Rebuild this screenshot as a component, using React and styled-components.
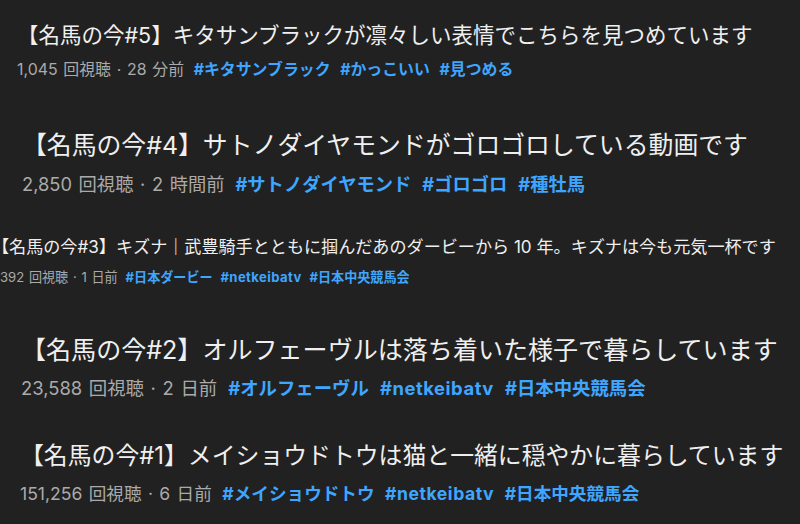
import React from "react";
import styled, { createGlobalStyle } from "styled-components";

const Global = createGlobalStyle`
  html, body { margin: 0; padding: 0; background: #212121; }
  body { font-family: "Inter", "Noto Sans CJK JP", sans-serif; }
`;

const Page = styled.div`
  width: 800px;
  height: 524px;
  overflow: hidden;
  background: #212121;
  display: flex;
  flex-direction: column;
  padding-top: 20px;
  box-sizing: border-box;
`;

const Block = styled.section`
  display: flex;
  flex-direction: column;
  gap: ${(p) => p.$gap}px;
  margin-top: ${(p) => p.$top}px;
  padding-left: ${(p) => p.$indent}px;
`;

const Title = styled.h3`
  margin: 0 0 0 ${(p) => p.$shift || 0}px;
  font-family: "Inter", "Noto Sans CJK JP", sans-serif;
  font-weight: 400;
  color: #efefef;
  font-size: ${(p) => p.$size}px;
  line-height: ${(p) => p.$lh}px;
  white-space: nowrap;
`;

const Meta = styled.div`
  font-family: "Inter", "Noto Sans CJK JP", sans-serif;
  color: #aaaaaa;
  font-size: ${(p) => p.$size}px;
  line-height: ${(p) => p.$lh}px;
  word-spacing: 0.08em;
  white-space: nowrap;
`;

const Tag = styled.span`
  color: #3ea6ff;
  font-weight: 700;
  margin-left: 0.6em;
  word-spacing: 0;
  letter-spacing: ${(p) => (p.$latin ? "0.03em" : "0")};
`;

const videos = [
  {
    title: "【名馬の今#5】キタサンブラックが凛々しい表情でこちらを見つめています",
    meta: "1,045 回視聴 · 28 分前",
    tags: ["#キタサンブラック", "#かっこいい", "#見つめる"],
    top: 0, indent: 17, tSize: 21.5, tLh: 30, mSize: 15.9, mLh: 20, gap: 10,
  },
  {
    title: "【名馬の今#4】サトノダイヤモンドがゴロゴロしている動画です",
    meta: "2,850 回視聴 · 2 時間前",
    tags: ["#サトノダイヤモンド", "#ゴロゴロ", "#種牡馬"],
    top: 48, indent: 22, tSize: 24.85, tLh: 34, mSize: 18.3, mLh: 24, gap: 10,
  },
  {
    title: "【名馬の今#3】キズナ｜武豊騎手とともに掴んだあのダービーから 10 年。キズナは今も元気一杯です",
    meta: "392 回視聴 · 1 日前",
    tags: ["#日本ダービー", "#netkeibatv", "#日本中央競馬会"],
    top: 39, indent: 0, tShift: -8, tSize: 17.1, tLh: 24, mSize: 13.1, mLh: 18, gap: 9,
  },
  {
    title: "【名馬の今#2】オルフェーヴルは落ち着いた様子で暮らしています",
    meta: "23,588 回視聴 · 2 日前",
    tags: ["#オルフェーヴル", "#netkeibatv", "#日本中央競馬会"],
    top: 47, indent: 21, tSize: 25.05, tLh: 34, mSize: 18.4, mLh: 24, gap: 9,
  },
  {
    title: "【名馬の今#1】メイショウドトウは猫と一緒に穏やかに暮らしています",
    meta: "151,256 回視聴 · 6 日前",
    tags: ["#メイショウドトウ", "#netkeibatv", "#日本中央競馬会"],
    top: 39, indent: 20, tSize: 23.85, tLh: 34, mSize: 17.6, mLh: 24, gap: 9,
  },
];

const isLatin = (t) => /^#[A-Za-z0-9]+$/.test(t);

export default function App() {
  return (
    <>
      <Global />
      <Page>
        {videos.map((v) => (
          <Block key={v.title} $top={v.top} $indent={v.indent} $gap={v.gap}>
            <Title $size={v.tSize} $lh={v.tLh} $shift={v.tShift}>
              {v.title}
            </Title>
            <Meta $size={v.mSize} $lh={v.mLh}>
              {v.meta}
              {v.tags.map((t) => (
                <Tag key={t} $latin={isLatin(t)}>
                  {t}
                </Tag>
              ))}
            </Meta>
          </Block>
        ))}
      </Page>
    </>
  );
}
